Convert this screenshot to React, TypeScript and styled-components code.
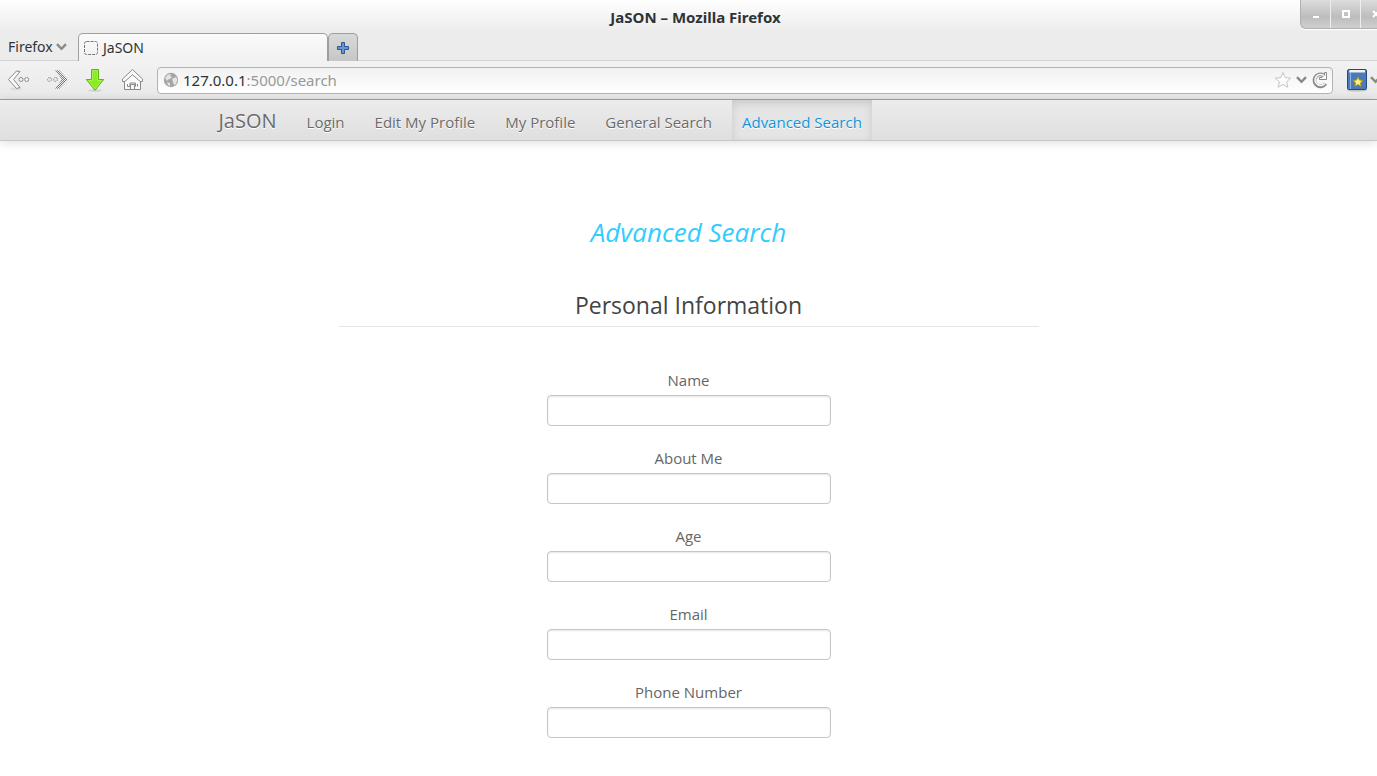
import React from "react";
import styled, { createGlobalStyle } from "styled-components";

const GlobalStyle = createGlobalStyle`
  * { box-sizing: border-box; }
  body {
    margin: 0;
    background: #fff;
    color: #666;
    font-family: "Open Sans", "Noto Sans", sans-serif;
    font-size: 15px;
    line-height: 20px;
    overflow-x: hidden;
  }
  button, input { font: inherit; }
`;

const Clip = styled.header`
  overflow: hidden;
`;

const Chrome = styled.div`
  width: calc(100% + 14px);
  color: #2e3436;
  font-family: "Noto Sans", sans-serif;
  font-size: 14px;
  background: linear-gradient(#fefefe 0, #ececec 32px, #ececec 60px);
  border-bottom: 1px solid #a1a3a0;
`;

const TitleBar = styled.div`
  display: grid;
  grid-template-columns: 1fr auto 1fr;
  height: 33px;
`;

const WindowTitle = styled.div`
  grid-column: 2;
  font-size: 15px;
  font-weight: 700;
  line-height: 34px;
`;

const Controls = styled.div`
  justify-self: end;
  display: flex;
  height: 29px;
  border: 1px solid #b0b0b0;
  border-top: 0;
  border-right: 0;
  border-radius: 0 0 0 6px;
  background: linear-gradient(#dcdcdc, #bdbdbd 60%, #cfcfcf);
  box-shadow: 0 1px 0 #fff;
`;

const ControlButton = styled.button`
  width: 30px;
  padding: 0;
  border: 0;
  border-right: 1px solid #eee;
  background: none;
  display: flex;
  align-items: center;
  justify-content: center;
  svg { display: block; }
  &:last-child { border-right: 0; }
`;

const TabStrip = styled.div`
  display: flex;
  align-items: flex-end;
  height: 28px;
  box-shadow: inset 0 -1px 0 #d3d3d3;
`;

const AppMenu = styled.button`
  display: flex;
  align-items: center;
  gap: 3px;
  width: 78px;
  height: 28px;
  padding: 0 0 0 8px;
  border: 0;
  background: none;
  color: inherit;
`;

const Tab = styled.button`
  display: flex;
  align-items: center;
  gap: 5px;
  width: 250px;
  height: 28px;
  padding: 0 5px;
  border: 1px solid #9d9f9c;
  border-bottom: 0;
  border-radius: 5px 5px 0 0;
  background: linear-gradient(#fafafa, #f1f1f1);
  color: inherit;
`;

const NewTab = styled.button`
  display: flex;
  align-items: center;
  justify-content: center;
  width: 30px;
  height: 28px;
  padding: 0;
  border: 1px solid #9d9f9c;
  border-bottom: 0;
  border-radius: 5px 5px 0 0;
  background: linear-gradient(#d9d9d9, #c6c6c6);
`;

const Toolbar = styled.div`
  display: flex;
  align-items: center;
  height: 38px;
  padding-left: 6px;
  background: linear-gradient(#f2f2f2, #e9e9e9);
`;

const ToolGroup = styled.div`
  display: flex;
  gap: 12px;
  margin-right: 11px;
`;

const ToolButton = styled.button`
  width: 26px;
  height: 26px;
  padding: 0;
  border: 0;
  background: none;
  svg { display: block; }
`;

const AddressBar = styled.div`
  display: flex;
  align-items: center;
  flex: 1;
  height: 27px;
  margin-right: 13px;
  padding: 0 4px 0 5px;
  gap: 4px;
  border: 1px solid #b3b3b3;
  border-radius: 4px;
  background: linear-gradient(#f1f1f1, #fff);
  svg { display: block; }
`;

const Address = styled.div`
  flex: 1;
  font-size: 15px;
  color: #2e3436;
  span { color: #999; }
`;

const IconButton = styled.button`
  display: flex;
  align-items: center;
  padding: 0;
  border: 0;
  background: none;
`;

const Bookmarks = styled.div`
  display: flex;
  align-items: center;
  gap: 2px;
  width: 45px;
`;

const NavBar = styled.nav`
  height: 41px;
  border-bottom: 1px solid #c8c8c8;
  background: linear-gradient(#ececec, #dfdfdf);
  box-shadow: 0 1px 10px rgba(0, 0, 0, 0.15);
`;

const NavInner = styled.div`
  display: flex;
  max-width: 940px;
  height: 40px;
  margin: 0 auto;
  gap: 10px;
`;

const NavLink = styled.a<{ $active?: boolean }>`
  padding: 12px 10px 8px;
  color: ${(p) => (p.$active ? "#0d96dc" : "#6b6b6b")};
  background: ${(p) => (p.$active ? "#e5e5e5" : "none")};
  box-shadow: ${(p) => (p.$active ? "inset 0 3px 8px rgba(0, 0, 0, 0.125)" : "none")};
  text-decoration: none;
  text-shadow: 0 1px 0 #fff;
`;

const Brand = styled(NavLink)`
  padding: 11px 10px 9px 0;
  font-size: 20px;
`;

const Main = styled.main`
  max-width: 700px;
  margin: 0 auto;
  padding-top: 71px;
  text-align: center;
`;

const PageTitle = styled.h1`
  margin: 0 0 36px;
  color: #33ccff;
  font-size: 26px;
  font-style: italic;
  font-weight: 400;
  line-height: 40px;
`;

const Fields = styled.fieldset`
  margin: 0;
  padding: 0;
  border: 0;
`;

const Legend = styled.legend`
  width: 100%;
  margin-bottom: 43px;
  padding: 0 0 4px;
  border-bottom: 1px solid #e5e5e5;
  color: #444;
  font-size: 23px;
  line-height: 34px;
`;

const Field = styled.div`
  display: flex;
  flex-direction: column;
  align-items: center;
  margin-bottom: 22px;
`;

const Label = styled.label`
  margin-bottom: 5px;
`;

const TextBox = styled.input`
  width: 284px;
  height: 31px;
  padding: 4px 6px;
  border: 1px solid #c6c6c6;
  border-radius: 4px;
  background: #fff;
  box-shadow: inset 0 1px 2px rgba(0, 0, 0, 0.1);
`;

const Chevron = () => (
  <svg width="11" height="8" viewBox="0 0 11 8" fill="none" stroke="#888a85" strokeWidth="2.4">
    <path d="M1 1.2 5.500 5.800 10 1.200" />
  </svg>
);

const BackIcon = () => (
  <svg width="26" height="26" viewBox="0 0 26 26" fill="#fafafa" stroke="#888a85">
    <ellipse cx="10" cy="22" rx="6" ry="1.500" fill="#dcdcdc" stroke="none" />
    <path d="M10.500 4 2.500 12.500 10.500 21.500 14 20.500 7.500 12.500 14 4.500z" strokeLinejoin="round" />
    <circle cx="15" cy="12.500" r="2" /><circle cx="20.700" cy="12.500" r="2" />
  </svg>
);

const ForwardIcon = () => (
  <svg width="26" height="26" viewBox="0 0 26 26" fill="#e8e8e8" stroke="#888a85">
    <defs>
      <pattern id="checker" width="2" height="2" patternUnits="userSpaceOnUse">
        <path d="M0 0h1v1H0zM1 1h1v1H1z" fill="#777975" stroke="none" />
      </pattern>
    </defs>
    <path d="M15 3 24 12.500 15 22 11 21.500 18 12.500 11 3.500z" fill="url(#checker)" stroke="none" />
    <g strokeDasharray="1.500 .8"><circle cx="5.500" cy="12.500" r="2" /><circle cx="11.500" cy="12.500" r="2" /></g>
  </svg>
);

const DownloadIcon = () => (
  <svg width="26" height="26" viewBox="0 0 26 26">
    <ellipse cx="13" cy="23.500" rx="7" ry="1.500" fill="#d4d4d4" />
    <path d="M9.500 2.500h7v10h5.200L13 23.300 4.300 12.500h5.200z" fill="#8aec22" stroke="#5cb612" strokeLinejoin="round" />
    <path d="M10.500 3.500h5v10h4L13 21.800 6.500 13.500h4z" fill="none" stroke="#a6f04f" />
  </svg>
);

const HomeIcon = () => (
  <svg width="26" height="26" viewBox="0 0 26 26" fill="#fafafa" stroke="#888a85" strokeLinejoin="round">
    <path d="M4.500 14v8.500h16V14l-8-7z" />
    <path d="M12.500 2.500 2.500 12v2.500h2.300l7.700-6.800 7.700 6.800h2.300V12z" />
    <path d="M7.500 17v2.500H10v-3.500h5.500v3.500M10.500 22.500v-5h4v5M17.500 17v2.500" fill="none" />
  </svg>
);

const GlobeIcon = () => (
  <svg width="16" height="16" viewBox="0 0 16 16">
    <circle cx="8" cy="8" r="7.200" fill="#a5a5a5" />
    <path d="M2 6 5 2.500l3-.5-1 2 2 1-2 2-2 .5L4 9zM9 7l4-2 1.500 3-1.500 4-2 1-1-3zM4 10l3 1v3l-2-1z" fill="#e4e4e4" />
  </svg>
);

const starPath = "M9 1.500 11.200 6.600 16.700 7.100 12.600 10.800 13.800 16.200 9 13.400 4.200 16.200 5.400 10.800 1.300 7.100 6.800 6.600z";

const StarIcon = () => (
  <svg width="18" height="18" viewBox="0 0 18 18" fill="#fdfdfd" stroke="#c4c4c4" strokeLinejoin="round">
    <path d={starPath} />
  </svg>
);

const ReloadIcon = () => (
  <svg width="17" height="18" viewBox="0 0 17 18" fill="none" strokeLinejoin="round">
    <path d="M14.500 12.500A6 6 0 1 1 12.500 4.200" stroke="#888a85" strokeWidth="3.600" />
    <path d="M15.500 1.500v7h-7v-2h2.500l2.500-2.500v-2.500z" fill="#f8f8f8" stroke="#888a85" />
    <path d="M14 12.200A5.500 5.500 0 1 1 12.800 4.600" stroke="#f8f8f8" strokeWidth="1.600" />
  </svg>
);

const BookIcon = () => (
  <svg width="22" height="24" viewBox="0 0 22 24">
    <ellipse cx="11" cy="22.500" rx="10" ry="1.200" fill="#c4c4c4" />
    <path d="M1.500 3q0-1.500 1.500-1.500h16.500q1 0 1 1v18q0 1-1 1h-17q-1 0-1-1z" fill="#4a7ab8" stroke="#204a87" />
    <path d="M3.500 2h15.500v2.500H3z" fill="#f2f2f2" />
    <path d="M4.500 5v16" stroke="#8fb3dc" />
    <path d="m12 9 1.500 3.100 3.500.4-2.500 2.300.6 3.500-3.100-1.700-3.100 1.700.6-3.500L7 12.500l3.500-.4z" fill="#fdf089" stroke="#b49800" />
  </svg>
);

const navItems = ["Login", "Edit My Profile", "My Profile", "General Search", "Advanced Search"];
const fields = ["Name", "About Me", "Age", "Email", "Phone Number"];

export default function App() {
  return (
    <>
      <GlobalStyle />
      <Clip>
        <Chrome>
          <TitleBar>
            <WindowTitle>JaSON – Mozilla Firefox</WindowTitle>
            <Controls>
              <ControlButton aria-label="Minimize">
                <svg width="8" height="8"><path d="M1 6h6v2H1z" fill="#fff" /></svg>
              </ControlButton>
              <ControlButton aria-label="Maximize">
                <svg width="8" height="8"><path d="M1 1h6v6H1z" fill="none" stroke="#fff" strokeWidth="2" /></svg>
              </ControlButton>
              <ControlButton aria-label="Close">
                <svg width="8" height="8"><path d="m1 1 6 6m0-6L1 7" stroke="#fff" strokeWidth="2" /></svg>
              </ControlButton>
            </Controls>
          </TitleBar>
          <TabStrip>
            <AppMenu>Firefox<Chevron /></AppMenu>
            <Tab>
              <svg width="14" height="14" viewBox="0 0 14 14">
                <rect x=".5" y=".5" width="13" height="13" rx="2" fill="none" stroke="#777" strokeDasharray="3 1" />
              </svg>
              JaSON
            </Tab>
            <NewTab aria-label="New tab">
              <svg width="14" height="14" viewBox="0 0 14 14">
                <path d="M5.500 1.500h3v4h4v3h-4v4h-3v-4h-4v-3h4z" fill="#6795cb" stroke="#2c5796" strokeLinejoin="round" />
              </svg>
            </NewTab>
          </TabStrip>
          <Toolbar>
            <ToolGroup>
              <ToolButton aria-label="Back"><BackIcon /></ToolButton>
              <ToolButton aria-label="Forward"><ForwardIcon /></ToolButton>
              <ToolButton aria-label="Downloads"><DownloadIcon /></ToolButton>
              <ToolButton aria-label="Home"><HomeIcon /></ToolButton>
            </ToolGroup>
            <AddressBar>
              <GlobeIcon />
              <Address>127.0.0.1<span>:5000/search</span></Address>
              <IconButton aria-label="Bookmark"><StarIcon /></IconButton>
              <IconButton aria-label="History"><Chevron /></IconButton>
              <IconButton aria-label="Reload"><ReloadIcon /></IconButton>
            </AddressBar>
            <Bookmarks>
              <IconButton aria-label="Bookmarks"><BookIcon /></IconButton>
              <IconButton aria-label="Bookmarks menu"><Chevron /></IconButton>
            </Bookmarks>
          </Toolbar>
        </Chrome>
      </Clip>
      <NavBar>
        <NavInner>
          <Brand href="#">JaSON</Brand>
          {navItems.map((item) => (
            <NavLink key={item} href="#" $active={item === "Advanced Search"}>{item}</NavLink>
          ))}
        </NavInner>
      </NavBar>
      <Main>
        <PageTitle>Advanced Search</PageTitle>
        <form>
          <Fields>
            <Legend>Personal Information</Legend>
            {fields.map((name) => (
              <Field key={name}>
                <Label htmlFor={name}>{name}</Label>
                <TextBox id={name} type="text" />
              </Field>
            ))}
          </Fields>
        </form>
      </Main>
    </>
  );
}
